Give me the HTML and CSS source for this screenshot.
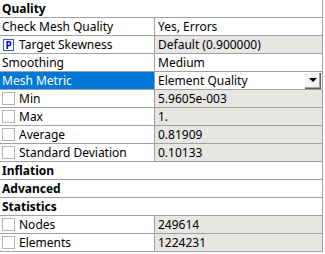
FILE: index.html
```html
<!DOCTYPE html>
<html lang="en">
<head>
    <meta charset="UTF-8">
    <title>Mesh Quality Details</title>
    <link rel="stylesheet" href="styles.css">
</head>
<body>
    <div class="grid">
        <div class="group"><span>Quality</span></div>

        <div class="row">
            <div class="label">Check Mesh Quality</div>
            <div class="value">Yes, Errors</div>
        </div>
        <div class="row">
            <div class="label"><span class="param">P</span>Target Skewness</div>
            <div class="value readonly">Default (0.900000)</div>
        </div>
        <div class="row">
            <div class="label">Smoothing</div>
            <div class="value">Medium</div>
        </div>
        <div class="row selected">
            <div class="label">Mesh Metric</div>
            <div class="value combo">
                <span>Element Quality</span>
                <span class="dropBtn"><span class="arrow"></span></span>
            </div>
        </div>
        <div class="row">
            <div class="label"><span class="check"></span>Min</div>
            <div class="value readonly">5.9605e-003</div>
        </div>
        <div class="row">
            <div class="label"><span class="check"></span>Max</div>
            <div class="value readonly">1.</div>
        </div>
        <div class="row">
            <div class="label"><span class="check"></span>Average</div>
            <div class="value readonly">0.81909</div>
        </div>
        <div class="row">
            <div class="label"><span class="check"></span>Standard Deviation</div>
            <div class="value readonly">0.10133</div>
        </div>

        <div class="group"><span>Inflation</span></div>
        <div class="group"><span>Advanced</span></div>
        <div class="group"><span>Statistics</span></div>

        <div class="row">
            <div class="label"><span class="check"></span>Nodes</div>
            <div class="value readonly">249614</div>
        </div>
        <div class="row">
            <div class="label"><span class="check"></span>Elements</div>
            <div class="value readonly">1224231</div>
        </div>
    </div>
</body>
</html>
```

FILE: styles.css
```css
body {
    margin: 0;
    background: #ffffff;
    font-family: "Noto Sans", "Open Sans", sans-serif;
    font-size: 12px;
    color: #000000;
}

.grid {
    width: 322px;
    border-right: 1px solid #a0a0a0;
}

.group {
    height: 17px;
    line-height: 17px;
    padding-left: 2px;
    font-weight: bold;
    border-bottom: 1px solid #a0a0a0;
}

.row {
    display: flex;
    height: 17px;
    line-height: 17px;
    border-bottom: 1px solid #a0a0a0;
}

.label {
    width: 152px;
    padding-left: 2px;
    border-right: 1px solid #a0a0a0;
    display: flex;
    align-items: center;
    white-space: nowrap;
}

.value {
    flex: 1;
    padding-left: 3px;
    white-space: nowrap;
}

.readonly {
    background: #e8e6e3;
}

.selected .label {
    background: #0078d7;
    color: #ffffff;
}

.combo {
    display: flex;
    justify-content: space-between;
    align-items: center;
}

.dropBtn {
    width: 15px;
    height: 15px;
    margin-right: 1px;
    background: #f4f4f4;
    border-right: 1px solid #606060;
    border-bottom: 1px solid #606060;
    box-shadow: inset -1px -1px 0 #a0a0a0;
    display: flex;
    align-items: center;
    justify-content: center;
}

.arrow {
    width: 0;
    height: 0;
    border-left: 4px solid transparent;
    border-right: 4px solid transparent;
    border-top: 4px solid #000000;
}

.check {
    width: 11px;
    height: 11px;
    border: 1px solid #b4b4b4;
    background: #ffffff;
    margin-right: 4px;
}

.param {
    width: 9px;
    height: 10px;
    border: 1px solid #3060c0;
    color: #0000e0;
    font-weight: bold;
    font-size: 10px;
    line-height: 10px;
    text-align: center;
    margin-left: 1px;
    margin-right: 5px;
}
```
